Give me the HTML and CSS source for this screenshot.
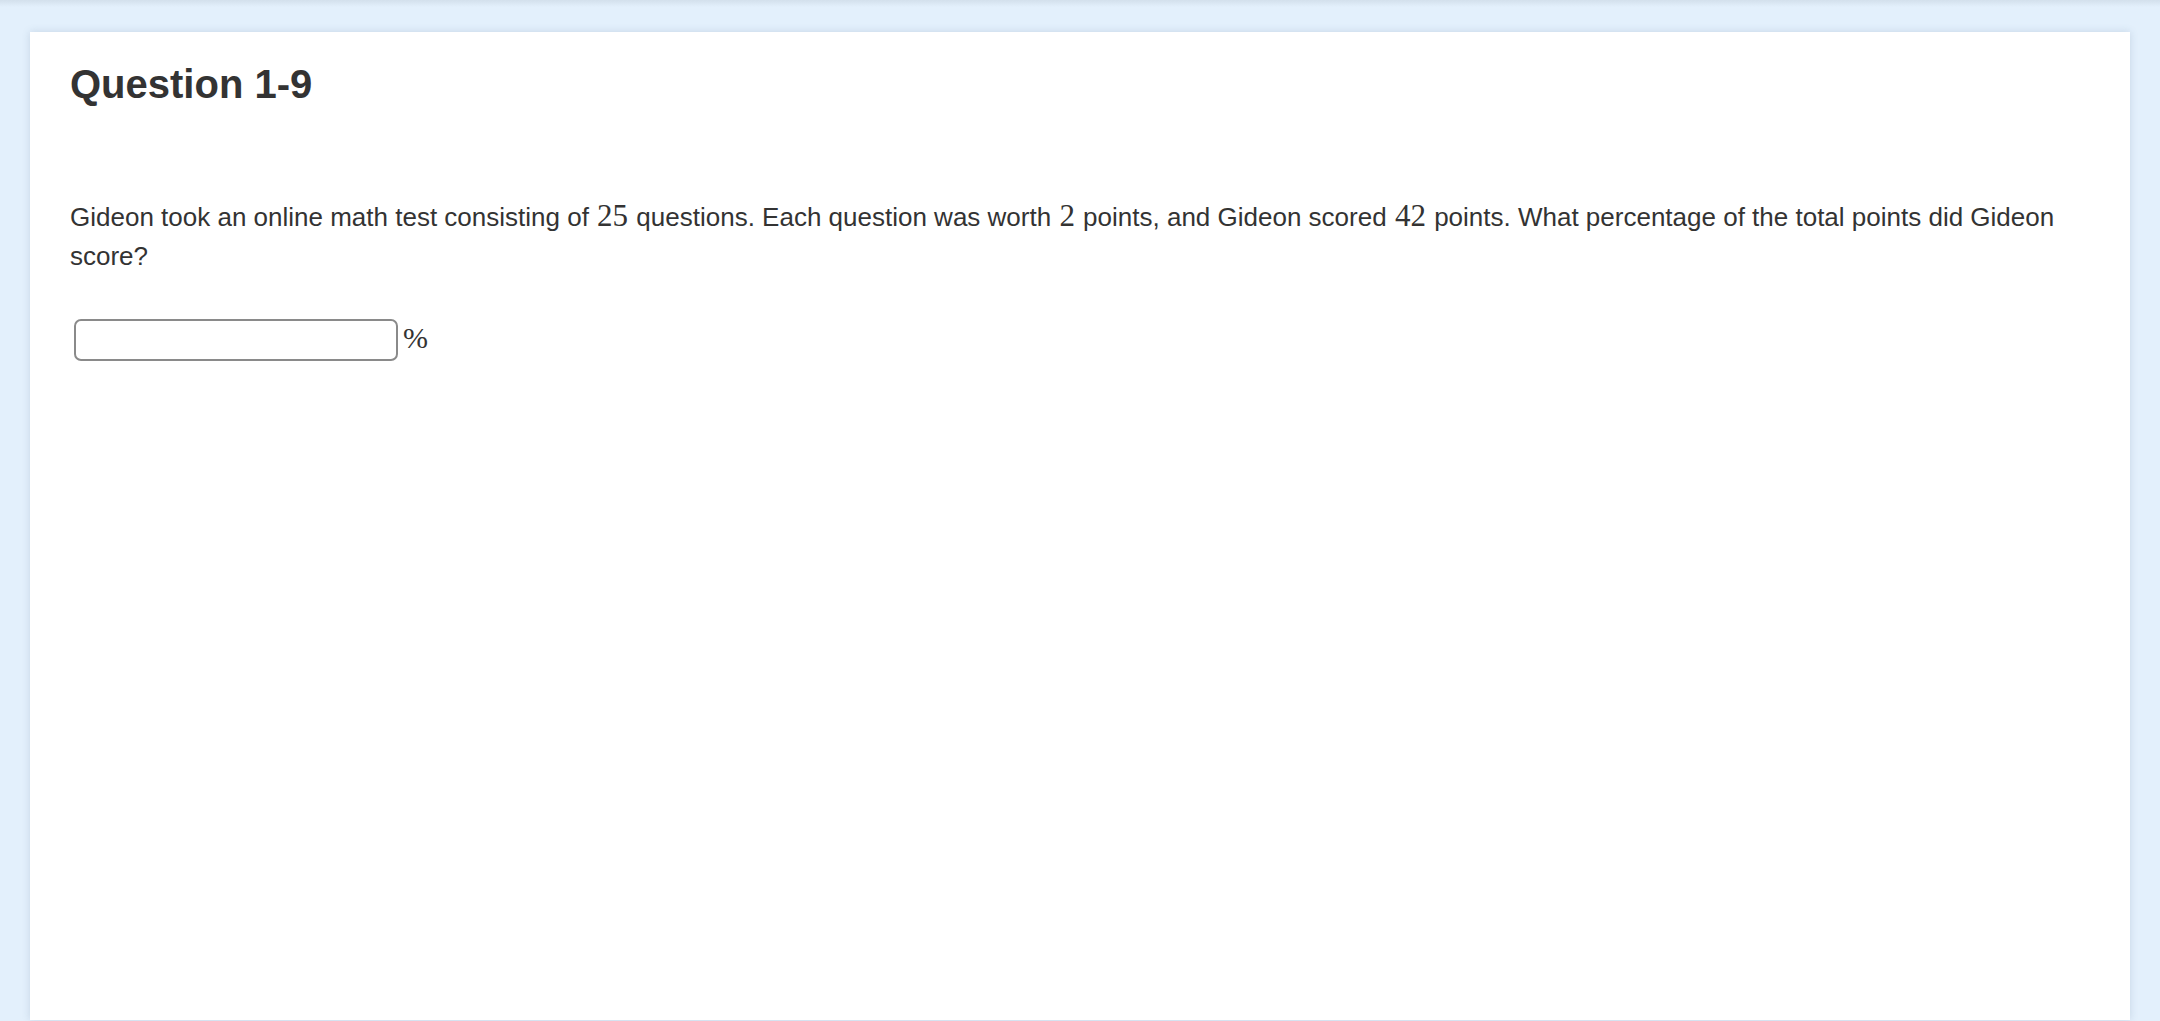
FILE: index.html
```html
<!DOCTYPE html>
<html lang="en">
<head>
<meta charset="utf-8">
<title>Question 1-9</title>
<link rel="stylesheet" href="styles.css">
</head>
<body>
<main class="card">
  <h2 class="title">Question 1-9</h2>
  <p class="prompt"><span>Gideon took an online math test consisting of</span> <span class="math">25</span> <span>questions. Each question was worth</span> <span class="math">2</span> <span>points, and Gideon scored</span> <span class="math">42</span> <span>points. What percentage of the total points did Gideon</span> <span>score?</span></p>
  <div class="answer">
    <input class="answer-input" type="text" aria-label="answer">
    <span class="unit">%</span>
  </div>
</main>
</body>
</html>
```

FILE: styles.css
```css
html, body {
  margin: 0;
  padding: 0;
}
body {
  background: linear-gradient(#d3e0ec 0, #e3f0fc 7px) no-repeat, #e3f0fc;
  background-color: #e3f0fc;
  font-family: "Liberation Sans", Arial, Helvetica, sans-serif;
  color: #333333;
  padding: 32px 30px 0 30px;
  height: 1021px;
  box-sizing: border-box;
  overflow: hidden;
}
.card {
  background: #ffffff;
  height: 988px;
  box-sizing: border-box;
  padding: 30px 40px;
  box-shadow: 0 0 8px rgba(60, 90, 120, 0.18);
}
.title {
  margin: 0;
  font-size: 40px;
  line-height: 45px;
  font-weight: 700;
  color: #333333;
}
.prompt {
  margin: 91px 0 0 0;
  font-size: 26px;
  line-height: 39px;
  color: #333333;
}
.math {
  display: inline-block;
  font-family: "Liberation Serif", "Times New Roman", serif;
  font-size: 31px;
  line-height: 26px;
  margin: 0 1px;
}
.answer {
  display: flex;
  align-items: center;
  margin-top: 43px;
  padding-left: 4px;
}
.answer-input {
  width: 324px;
  height: 42px;
  box-sizing: border-box;
  border: 2px solid #8a8a8a;
  border-radius: 7px;
  background: #ffffff;
  margin: 0;
  padding: 0 8px;
  font-size: 22px;
}
.unit {
  font-family: "Liberation Serif", "Times New Roman", serif;
  font-size: 30px;
  color: #333333;
  margin-left: 5px;
  margin-top: -4px;
}
```
